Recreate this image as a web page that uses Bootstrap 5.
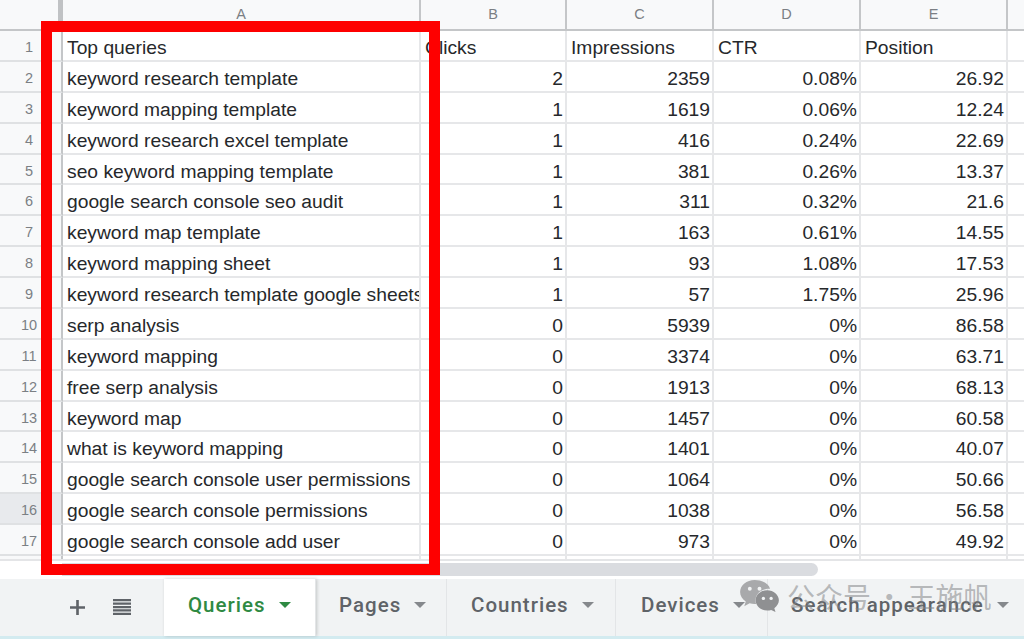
<!DOCTYPE html>
<html lang="en">
<head>
<meta charset="utf-8">
<title>Top queries</title>
<link href="https://cdn.jsdelivr.net/npm/bootstrap@5.3.0/dist/css/bootstrap.min.css" rel="stylesheet">
<style>
html,body{height:639px;overflow:hidden;background:#fff}
.shell{position:relative;width:1024px;height:639px;overflow:hidden}
.sheet-wrap{height:561px;overflow:hidden;border-bottom:2px solid #e4e5e7}
.sheet{display:grid;grid-template-columns:63px 358px 146px 147px 147px 147px 83px;grid-template-rows:31px;grid-auto-rows:30.875px;width:1091px;font-family:"Liberation Sans",Arial,sans-serif;font-size:19.25px;color:#26282b}
.sheet thead,.sheet tbody,.sheet tr{display:contents}
.sheet td,.sheet th{padding:4px 2px 0 4px;line-height:26px;border-right:2px solid #e6e7e9;border-bottom:2px solid #e6e7e9;overflow:hidden;white-space:nowrap;font-weight:400;box-sizing:border-box}
.sheet thead th{padding:1px 0 0;background:#f8f9fa;color:#7b7f84;font-size:14.5px;text-align:center;border-right:2px solid #c4c6c8;border-bottom:2px solid #c4c6c8;line-height:26px}
.sheet th.rownum{background:#f8f9fa;color:#7b7f84;font-size:14.5px;text-align:center;padding:3px 3px 0 0;border-right:2px solid #c4c6c8;border-bottom:2px solid #dfe1e3}
.sheet th.rownum.hot{background:#e8eaed}
.sheet thead th.corner{border-right:5px solid #c0c2c4}
.sheet td.spill{overflow:visible}
.scroll-row{height:16px;background:#fff}
.scroll-thumb{margin-left:62px;width:756px;height:13px;margin-top:2px;background:#dadce0;border-radius:0 7px 7px 0}
.tabbar{height:57px;background:#f1f3f4;font-family:Roboto,sans-serif;font-weight:500;font-size:20.5px;letter-spacing:1px;color:#5f6368}
.tool-zone{width:164px;padding-left:70px;gap:28px;padding-bottom:1px}
.sheet-tab{height:57px;padding:0 0 4px 23px;border-right:1px solid #e3e5e7;gap:13px}
.sheet-tab.on{background:#fff;color:#2f8a43;padding-left:24px;box-shadow:1px 0 3px rgba(60,64,67,.25)}
.w-queries{width:152px}.w-pages{width:131px}.w-countries{width:169px;padding-left:24px}.w-devices{width:152px;padding-left:25px}
.caret{width:0;height:0;border-left:6px solid transparent;border-right:6px solid transparent;border-top:6px solid #85888c;margin-top:-1px}
.on .caret{border-top-color:#2f8a43}
.strip{height:5px;background:#d3ebf0}
.redbox{position:absolute;left:41px;top:21px;width:399px;height:554px;border:11px solid #fe0000;pointer-events:none}
.mark-water{position:absolute;left:740px;top:578px;height:36px;gap:8px;color:rgba(130,132,135,.55);font-family:"Noto Sans CJK SC",sans-serif;font-size:28px;line-height:32px;white-space:nowrap;pointer-events:none}
.mark-dot{margin:0 -2px}
</style>
</head>
<body>
<div class="shell">
  <div class="sheet-wrap">
  <table class="sheet mb-0">
    <thead><tr><th class="corner"></th><th>A</th><th>B</th><th>C</th><th>D</th><th>E</th><th></th></tr></thead>
    <tbody>
      <tr><th class="rownum">1</th><td>Top queries</td><td class="spill">Clicks</td><td>Impressions</td><td>CTR</td><td>Position</td><td></td></tr>
      <tr><th class="rownum">2</th><td>keyword research template</td><td class="text-end">2</td><td class="text-end">2359</td><td class="text-end">0.08%</td><td class="text-end">26.92</td><td></td></tr>
      <tr><th class="rownum">3</th><td>keyword mapping template</td><td class="text-end">1</td><td class="text-end">1619</td><td class="text-end">0.06%</td><td class="text-end">12.24</td><td></td></tr>
      <tr><th class="rownum">4</th><td>keyword research excel template</td><td class="text-end">1</td><td class="text-end">416</td><td class="text-end">0.24%</td><td class="text-end">22.69</td><td></td></tr>
      <tr><th class="rownum">5</th><td>seo keyword mapping template</td><td class="text-end">1</td><td class="text-end">381</td><td class="text-end">0.26%</td><td class="text-end">13.37</td><td></td></tr>
      <tr><th class="rownum">6</th><td>google search console seo audit</td><td class="text-end">1</td><td class="text-end">311</td><td class="text-end">0.32%</td><td class="text-end">21.6</td><td></td></tr>
      <tr><th class="rownum">7</th><td>keyword map template</td><td class="text-end">1</td><td class="text-end">163</td><td class="text-end">0.61%</td><td class="text-end">14.55</td><td></td></tr>
      <tr><th class="rownum">8</th><td>keyword mapping sheet</td><td class="text-end">1</td><td class="text-end">93</td><td class="text-end">1.08%</td><td class="text-end">17.53</td><td></td></tr>
      <tr><th class="rownum">9</th><td>keyword research template google sheets</td><td class="text-end">1</td><td class="text-end">57</td><td class="text-end">1.75%</td><td class="text-end">25.96</td><td></td></tr>
      <tr><th class="rownum">10</th><td>serp analysis</td><td class="text-end">0</td><td class="text-end">5939</td><td class="text-end">0%</td><td class="text-end">86.58</td><td></td></tr>
      <tr><th class="rownum">11</th><td>keyword mapping</td><td class="text-end">0</td><td class="text-end">3374</td><td class="text-end">0%</td><td class="text-end">63.71</td><td></td></tr>
      <tr><th class="rownum">12</th><td>free serp analysis</td><td class="text-end">0</td><td class="text-end">1913</td><td class="text-end">0%</td><td class="text-end">68.13</td><td></td></tr>
      <tr><th class="rownum">13</th><td>keyword map</td><td class="text-end">0</td><td class="text-end">1457</td><td class="text-end">0%</td><td class="text-end">60.58</td><td></td></tr>
      <tr><th class="rownum">14</th><td>what is keyword mapping</td><td class="text-end">0</td><td class="text-end">1401</td><td class="text-end">0%</td><td class="text-end">40.07</td><td></td></tr>
      <tr><th class="rownum">15</th><td>google search console user permissions</td><td class="text-end">0</td><td class="text-end">1064</td><td class="text-end">0%</td><td class="text-end">50.66</td><td></td></tr>
      <tr><th class="rownum hot">16</th><td>google search console permissions</td><td class="text-end">0</td><td class="text-end">1038</td><td class="text-end">0%</td><td class="text-end">56.58</td><td></td></tr>
      <tr><th class="rownum">17</th><td>google search console add user</td><td class="text-end">0</td><td class="text-end">973</td><td class="text-end">0%</td><td class="text-end">49.92</td><td></td></tr>
      <tr><th class="rownum"></th><td></td><td></td><td></td><td></td><td></td><td></td></tr>
    </tbody>
  </table>
  </div>
  <div class="scroll-row"><div class="scroll-thumb"></div></div>
  <div class="tabbar d-flex align-items-center">
    <div class="tool-zone d-flex align-items-center">
      <svg width="15" height="15" viewBox="0 0 16 16" aria-hidden="true"><path d="M6.600 0h2.800v6.600H16v2.800H9.400V16H6.600V9.400H0V6.600h6.600z" fill="#5f6368"/></svg>
      <svg width="18" height="16" viewBox="0 0 18 16" aria-hidden="true"><path d="M0 0h18v2.300H0zM0 3.400h18v2.300H0zM0 6.900h18v2.300H0zM0 10.300h18v2.300H0zM0 13.700h18V16H0z" fill="#5f6368"/></svg>
    </div>
    <div class="sheet-tab on w-queries d-flex align-items-center"><span>Queries</span><i class="caret"></i></div>
    <div class="sheet-tab w-pages d-flex align-items-center"><span>Pages</span><i class="caret"></i></div>
    <div class="sheet-tab w-countries d-flex align-items-center"><span>Countries</span><i class="caret"></i></div>
    <div class="sheet-tab w-devices d-flex align-items-center"><span>Devices</span><i class="caret"></i></div>
    <div class="sheet-tab d-flex align-items-center border-0"><span>Search appearance</span><i class="caret"></i></div>
  </div>
  <div class="strip"></div>
  <div class="redbox"></div>
  <div class="mark-water d-flex align-items-center">
    <svg width="39" height="32" viewBox="0 0 40 33" aria-hidden="true">
      <path fill="#a8a9ab" d="M15 0C6.800 0 0 5.500 0 12.500c0 4 2.200 7.400 5.800 9.700L4.300 27l5.500-3c1.700.5 3.400.8 5.200.8.500 0 1 0 1.500-.1-.4-1.200-.6-2.500-.6-3.800 0-6.700 6.200-12 13.800-12 .4 0 .8 0 1.200.1C29.400 3.600 22.800 0 15 0z"/>
      <circle cx="10" cy="9" r="2" fill="#f1f3f4"/><circle cx="20" cy="9" r="2" fill="#f1f3f4"/>
      <path fill="#8f9092" d="M40 21c0-5.900-5.500-10.500-12-10.500S16 15.100 16 21s5.500 10.500 12 10.500c1.400 0 2.800-.2 4-.6l4.500 2.100-1.200-3.900c2.800-2 4.700-4.900 4.700-8.100z"/>
      <circle cx="24" cy="19" r="1.700" fill="#f1f3f4"/><circle cx="32" cy="19" r="1.700" fill="#f1f3f4"/>
    </svg>
    <span>公众号<span class="mark-dot"> · </span>王施帆</span>
  </div>
</div>
<script src="https://cdn.jsdelivr.net/npm/bootstrap@5.3.0/dist/js/bootstrap.bundle.min.js"></script>
</body>
</html>
